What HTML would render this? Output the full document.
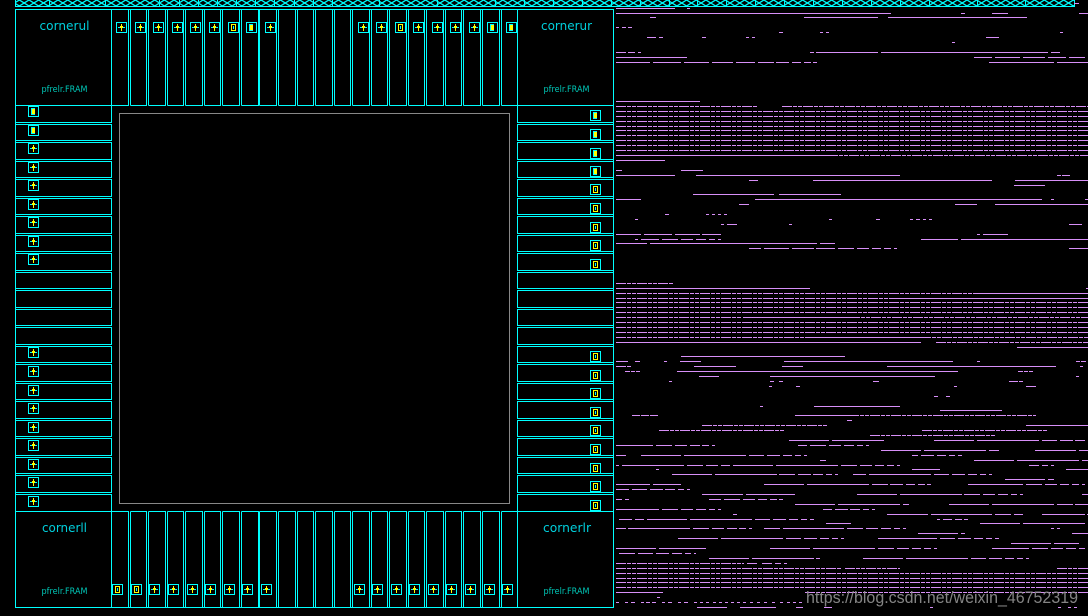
<!DOCTYPE html>
<html><head><meta charset="utf-8"><title>Layout</title>
<style>html,body{margin:0;padding:0;background:#000;width:1088px;height:616px;overflow:hidden}svg{display:block}</style>
</head><body>
<svg width="1088" height="616" viewBox="0 0 1088 616" xmlns="http://www.w3.org/2000/svg" shape-rendering="crispEdges">
<defs>
<pattern id="h" width="9.67" height="6" patternUnits="userSpaceOnUse"><path d="M0 0L9.67 6M9.67 0L0 6" stroke="#0ff" stroke-width="1.3" fill="none" shape-rendering="auto"/></pattern>
<g id="A"><rect x=".5" y=".5" width="10" height="10" fill="#000" stroke="#0ff"/><path d="M2 5.5H9" stroke="#0ff" fill="none"/><rect x="5" y="2" width="1" height="7" fill="#ff0"/><rect x="4" y="4" width="3" height="2" fill="#ff0"/></g>
<g id="B"><rect x=".5" y=".5" width="10" height="10" fill="#000" stroke="#0ff"/><path d="M3.5 2V9M3 2.5H7M3 8.5H7" stroke="#0ff" fill="none"/><rect x="4" y="3" width="3" height="5" fill="#ff0"/></g>
<g id="C"><rect x=".5" y=".5" width="10" height="10" fill="#000" stroke="#0ff"/><rect x="3.5" y="2.5" width="4" height="6" fill="none" stroke="#ff0"/><path d="M5.5 4V7" stroke="#0ff" fill="none"/></g>
</defs>
<rect width="1088" height="616" fill="#000"/>
<rect x="15" y="0" width="1059" height="6" fill="url(#h)"/>
<path d="M15 6.5H1075M15.5 0V6M49.5 0V6M105.5 0V6M159.5 0V6M179.5 0V6M198.5 0V6M217.5 0V6M236.5 0V6M255.5 0V6M274.5 0V6M294.5 0V6M313.5 0V6M332.5 0V6M379.5 0V6M437.5 0V6M495.5 0V6M524.5 0V6M553.5 0V6M582.5 0V6M611.5 0V6M640.5 0V6M669.5 0V6M697.5 0V6M726.5 0V6M755.5 0V6M784.5 0V6M813.5 0V6M842.5 0V6M871.5 0V6M900.5 0V6M929.5 0V6M977.5 0V6M1025.5 0V6M1074.5 0V6" stroke="#0ff" fill="none"/>
<g fill="none" stroke="#0ff">
<rect x="15.5" y="9.5" width="598" height="598"/>
<path d="M15 105.5H111M517 105.5H613M15 511.5H111M517 511.5H613"/>
<path d="M111.5 9V105.5H128.5V9M130.5 105.5V9M130.5 105.5H146.5V9M148.5 105.5V9M148.5 105.5H165.5V9M167.5 105.5V9M167.5 105.5H183.5V9M185.5 105.5V9M185.5 105.5H202.5V9M204.5 105.5V9M204.5 105.5H220.5V9M222.5 105.5V9M222.5 105.5H239.5V9M241.5 105.5V9M241.5 105.5H258.5V9M259.5 105.5V9M259.5 105.5H276.5V9M278.5 105.5V9M278.5 105.5H295.5V9M297.5 105.5V9M297.5 105.5H313.5V9M315.5 105.5V9M315.5 105.5H332.5V9M334.5 105.5V9M334.5 105.5H350.5V9M352.5 105.5V9M352.5 105.5H369.5V9M371.5 105.5V9M371.5 105.5H387.5V9M389.5 105.5V9M389.5 105.5H406.5V9M408.5 105.5V9M408.5 105.5H424.5V9M426.5 105.5V9M426.5 105.5H443.5V9M445.5 105.5V9M445.5 105.5H461.5V9M463.5 105.5V9M463.5 105.5H480.5V9M482.5 105.5V9M482.5 105.5H499.5V9M501.5 105.5V9M501.5 105.5H517.5V9"/>
<path d="M111.5 607V511.5H128.5V607M130.5 511.5V607M130.5 511.5H146.5V607M148.5 511.5V607M148.5 511.5H165.5V607M167.5 511.5V607M167.5 511.5H183.5V607M185.5 511.5V607M185.5 511.5H202.5V607M204.5 511.5V607M204.5 511.5H220.5V607M222.5 511.5V607M222.5 511.5H239.5V607M241.5 511.5V607M241.5 511.5H258.5V607M259.5 511.5V607M259.5 511.5H276.5V607M278.5 511.5V607M278.5 511.5H295.5V607M297.5 511.5V607M297.5 511.5H313.5V607M315.5 511.5V607M315.5 511.5H332.5V607M334.5 511.5V607M334.5 511.5H350.5V607M352.5 511.5V607M352.5 511.5H369.5V607M371.5 511.5V607M371.5 511.5H387.5V607M389.5 511.5V607M389.5 511.5H406.5V607M408.5 511.5V607M408.5 511.5H424.5V607M426.5 511.5V607M426.5 511.5H443.5V607M445.5 511.5V607M445.5 511.5H461.5V607M463.5 511.5V607M463.5 511.5H480.5V607M482.5 511.5V607M482.5 511.5H499.5V607M501.5 511.5V607M501.5 511.5H517.5V607"/>
<path d="M111.5 105V122.5H15M15 124.5H111.5V140.5H15M15 142.5H111.5V159.5H15M15 161.5H111.5V177.5H15M15 179.5H111.5V196.5H15M15 198.5H111.5V214.5H15M15 216.5H111.5V233.5H15M15 235.5H111.5V251.5H15M15 253.5H111.5V270.5H15M15 272.5H111.5V288.5H15M15 290.5H111.5V307.5H15M15 309.5H111.5V325.5H15M15 327.5H111.5V344.5H15M15 346.5H111.5V362.5H15M15 364.5H111.5V381.5H15M15 383.5H111.5V399.5H15M15 401.5H111.5V418.5H15M15 420.5H111.5V436.5H15M15 438.5H111.5V455.5H15M15 457.5H111.5V473.5H15M15 475.5H111.5V492.5H15M15 494.5H111.5V511"/>
<path d="M517.5 105V122.5H613M613 124.5H517.5V140.5H613M613 142.5H517.5V159.5H613M613 161.5H517.5V177.5H613M613 179.5H517.5V196.5H613M613 198.5H517.5V214.5H613M613 216.5H517.5V233.5H613M613 235.5H517.5V251.5H613M613 253.5H517.5V270.5H613M613 272.5H517.5V288.5H613M613 290.5H517.5V307.5H613M613 309.5H517.5V325.5H613M613 327.5H517.5V344.5H613M613 346.5H517.5V362.5H613M613 364.5H517.5V381.5H613M613 383.5H517.5V399.5H613M613 401.5H517.5V418.5H613M613 420.5H517.5V436.5H613M613 438.5H517.5V455.5H613M613 457.5H517.5V473.5H613M613 475.5H517.5V492.5H613M613 494.5H517.5V511"/>
</g>
<rect x="119.5" y="113.5" width="390" height="390" fill="none" stroke="#888"/>
<g font-family="'DejaVu Sans',sans-serif" font-size="12" fill="#00cfdc" shape-rendering="auto">
<text x="39.5" y="30" textLength="50" lengthAdjust="spacingAndGlyphs">cornerul</text>
<text x="541" y="30" textLength="51" lengthAdjust="spacingAndGlyphs">cornerur</text>
<text x="42" y="532" textLength="45" lengthAdjust="spacingAndGlyphs">cornerll</text>
<text x="543" y="532" textLength="48" lengthAdjust="spacingAndGlyphs">cornerlr</text>
</g>
<g font-family="'DejaVu Sans',sans-serif" font-size="9" fill="#00c8b8" shape-rendering="auto">
<text x="41.5" y="92" textLength="46" lengthAdjust="spacingAndGlyphs">pfrelr.FRAM</text>
<text x="543.5" y="92" textLength="46" lengthAdjust="spacingAndGlyphs">pfrelr.FRAM</text>
<text x="41.5" y="594" textLength="46" lengthAdjust="spacingAndGlyphs">pfrelr.FRAM</text>
<text x="543.5" y="594" textLength="46" lengthAdjust="spacingAndGlyphs">pfrelr.FRAM</text>
</g>
<use href="#A" x="116" y="22"/><use href="#A" x="135" y="22"/><use href="#A" x="153" y="22"/><use href="#A" x="172" y="22"/><use href="#A" x="190" y="22"/><use href="#A" x="209" y="22"/><use href="#C" x="228" y="22"/><use href="#B" x="246" y="22"/><use href="#A" x="265" y="22"/>
<use href="#A" x="358" y="22"/><use href="#A" x="376" y="22"/><use href="#C" x="395" y="22"/><use href="#A" x="413" y="22"/><use href="#A" x="432" y="22"/><use href="#A" x="450" y="22"/><use href="#A" x="469" y="22"/><use href="#B" x="487" y="22"/><use href="#B" x="506" y="22"/>
<use href="#B" x="28" y="106"/><use href="#B" x="28" y="125"/><use href="#A" x="28" y="143"/><use href="#A" x="28" y="162"/><use href="#A" x="28" y="180"/><use href="#A" x="28" y="199"/><use href="#A" x="28" y="217"/><use href="#A" x="28" y="236"/><use href="#A" x="28" y="254"/>
<use href="#A" x="28" y="347"/><use href="#A" x="28" y="366"/><use href="#A" x="28" y="385"/><use href="#A" x="28" y="403"/><use href="#A" x="28" y="422"/><use href="#A" x="28" y="440"/><use href="#A" x="28" y="459"/><use href="#A" x="28" y="477"/><use href="#A" x="28" y="496"/>
<use href="#B" x="590" y="110"/><use href="#B" x="590" y="129"/><use href="#B" x="590" y="148"/><use href="#B" x="590" y="166"/><use href="#C" x="590" y="184"/><use href="#C" x="590" y="203"/><use href="#C" x="590" y="222"/><use href="#C" x="590" y="240"/><use href="#C" x="590" y="259"/>
<use href="#C" x="590" y="351"/><use href="#C" x="590" y="370"/><use href="#C" x="590" y="388"/><use href="#C" x="590" y="407"/><use href="#C" x="590" y="425"/><use href="#C" x="590" y="444"/><use href="#C" x="590" y="463"/><use href="#C" x="590" y="481"/><use href="#C" x="590" y="500"/>
<use href="#C" x="112" y="584"/><use href="#C" x="131" y="584"/><use href="#A" x="149" y="584"/><use href="#A" x="168" y="584"/><use href="#A" x="187" y="584"/><use href="#A" x="205" y="584"/><use href="#A" x="224" y="584"/><use href="#A" x="242" y="584"/><use href="#A" x="261" y="584"/>
<use href="#A" x="354" y="584"/><use href="#A" x="372" y="584"/><use href="#A" x="391" y="584"/><use href="#A" x="409" y="584"/><use href="#A" x="428" y="584"/><use href="#A" x="446" y="584"/><use href="#A" x="465" y="584"/><use href="#A" x="484" y="584"/><use href="#A" x="502" y="584"/>
<path fill="none" stroke="#d78ff7" stroke-dasharray="10 1 4 1 4 1" d="M616 106.5H757M782 106.5H1088M616 111.5H1088M616 116.5H1088M616 121.5H1088M616 126.5H1088M616 130.5H1088M616 135.5H1088M616 140.5H1088M616 145.5H1088M616 150.5H1088M828 155.5H1088M616 283.5H673M616 293.5H973M616 298.5H899M616 302.5H1088M616 307.5H1088M616 312.5H1088M616 317.5H741M850 317.5H1088M616 322.5H1088M616 327.5H1088M616 332.5H1088M616 337.5H805M921 337.5H1088M936 342.5H1088M849 415.5H1036M702 425.5H828M659 430.5H785M922 430.5H1048M870 435.5H996M616 563.5H744M616 568.5H841M845 568.5H900M1057 568.5H1088M616 573.5H1088M616 578.5H1088M616 582.5H1088M616 587.5H1088M805 592.5H1088"/>
<path fill="none" stroke="#d78ff7" d="M1074 3.5H1079M616 8.5H675M687 8.5H690M616 13.5H891M961 13.5H965M992 13.5H1008M1079 13.5H1088M650 17.5H656M804 17.5H878M888 17.5H1027M616 27.5H619M622 27.5H626M628 27.5H632M779 32.5H783M820 32.5H823M826 32.5H829M1060 32.5H1063M647 37.5H656M659 37.5H663M702 37.5H706M746 37.5H749M752 37.5H755M986 37.5H999M952 42.5H955M616 52.5H626M628 52.5H635M638 52.5H641M810 52.5H814M816 52.5H878M881 52.5H1048M1051 52.5H1060M616 57.5H687M974 57.5H992M995 57.5H1020M1023 57.5H1045M1048 57.5H1066M1069 57.5H1085M616 62.5H650M653 62.5H681M684 62.5H709M712 62.5H733M736 62.5H755M758 62.5H774M776 62.5H789M792 62.5H801M804 62.5H811M813 62.5H817M989 62.5H1054M1057 62.5H1088
M616 101.5H700M616 155.5H828M616 160.5H665M616 170.5H622M681 170.5H703
M616 175.5H675M696 175.5H900M1057 175.5H1061M1062 175.5H1070M749 180.5H758M813 180.5H992M1015 180.5H1088M1014 185.5H1045M693 194.5H774M779 194.5H841M616 199.5H641M755 199.5H1042M1051 199.5H1054M1085 199.5H1088M739 204.5H749M955 204.5H977M995 204.5H1088M665 214.5H669M706 214.5H709M712 214.5H715M718 214.5H721M724 214.5H727M635 219.5H638M829 219.5H832M876 219.5H880M910 219.5H913M916 219.5H920M923 219.5H926M929 219.5H932M721 224.5H724M727 224.5H737M789 224.5H792M1069 224.5H1082M616 234.5H641M644 234.5H672M675 234.5H700M702 234.5H721M977 234.5H980M983 234.5H1008M635 239.5H638M641 239.5H659M662 239.5H678M681 239.5H693M696 239.5H706M709 239.5H715M718 239.5H721M921 239.5H958M961 239.5H1088M616 243.5H647M650 243.5H817M820 243.5H835M749 248.5H761M764 248.5H789M792 248.5H814M816 248.5H835M838 248.5H854M857 248.5H869M872 248.5H881M884 248.5H891M894 248.5H897M1069 248.5H1088
M616 288.5H810M1086 288.5H1088M973 293.5H1088M899 298.5H1088M743 317.5H850M805 337.5H921M616 342.5H921M1017 347.5H1088M681 356.5H845M616 361.5H628M635 361.5H640M664 361.5H667M680 361.5H701M784 361.5H953M977 361.5H980M1076 361.5H1080M1081 361.5H1086M616 366.5H626M627 366.5H631M694 366.5H736M782 366.5H803M887 366.5H1056M1080 366.5H1083
M625 371.5H630M631 371.5H635M636 371.5H640M677 371.5H958M1018 371.5H1023M1024 371.5H1028M1029 371.5H1033M699 376.5H719M770 376.5H935M1076 376.5H1079M669 381.5H672M770 381.5H774M779 381.5H783M873 381.5H879M1009 381.5H1018M1019 381.5H1023M769 386.5H772M796 386.5H800M954 386.5H957M1026 386.5H1036M934 396.5H938M946 396.5H950M760 406.5H763M814 406.5H900M940 410.5H1002M632 415.5H640M641 415.5H649M650 415.5H658M795 415.5H849M847 420.5H852M1026 425.5H1088
M789 440.5H829M832 440.5H884M934 440.5H974M977 440.5H1039M1042 440.5H1057M1060 440.5H1073M1075 440.5H1085M616 445.5H653M656 445.5H672M675 445.5H687M690 445.5H700M702 445.5H709M712 445.5H715M798 445.5H807M810 445.5H826M829 445.5H841M844 445.5H854M857 445.5H863M866 445.5H869
M881 450.5H921M924 450.5H986M989 450.5H999M1035 450.5H1076M1079 450.5H1088M616 455.5H626M641 455.5H681M684 455.5H746M749 455.5H764M767 455.5H780M783 455.5H792M795 455.5H801M804 455.5H807M912 455.5H918M921 455.5H934M937 455.5H946M949 455.5H955M958 455.5H962M820 460.5H826M974 460.5H1014M1017 460.5H1079M1082 460.5H1088M616 465.5H619M622 465.5H684M687 465.5H703M706 465.5H718M721 465.5H730M733 465.5H773M776 465.5H838M841 465.5H857M860 465.5H872M875 465.5H884M887 465.5H894M897 465.5H900M1029 465.5H1039M1042 465.5H1048M1051 465.5H1054M656 469.5H659M912 469.5H940M1066 469.5H1088
M672 474.5H712M715 474.5H777M779 474.5H795M798 474.5H811M813 474.5H823M826 474.5H832M835 474.5H838M853 474.5H866M869 474.5H931M934 474.5H949M952 474.5H965M968 474.5H977M980 474.5H986M989 474.5H992M1005 479.5H1045M1048 479.5H1054M616 484.5H650M653 484.5H681M764 484.5H804M807 484.5H869M872 484.5H888M890 484.5H903M906 484.5H915M918 484.5H925M927 484.5H931M968 484.5H1023M1026 484.5H1042M1045 484.5H1057M1060 484.5H1069M1072 484.5H1079M1082 484.5H1085M616 489.5H629M632 489.5H647M650 489.5H663M665 489.5H675M678 489.5H684M687 489.5H690
M702 494.5H743M746 494.5H795M857 494.5H897M900 494.5H962M964 494.5H980M983 494.5H995M998 494.5H1008M1011 494.5H1017M1020 494.5H1023M1082 494.5H1088M616 499.5H622M625 499.5H629M709 499.5H721M724 499.5H740M743 499.5H755M758 499.5H767M770 499.5H777M779 499.5H783M795 504.5H835M838 504.5H900M903 504.5H909M949 504.5H989M992 504.5H1054M1057 504.5H1073M1075 504.5H1088M616 509.5H659M662 509.5H678M681 509.5H693M696 509.5H706M709 509.5H715M718 509.5H721M823 509.5H832M835 509.5H848M850 509.5H860M863 509.5H869M872 509.5H875
M733 514.5H737M887 514.5H928M931 514.5H992M995 514.5H1011M1014 514.5H1023M1042 514.5H1085M1087 514.5H1088M619 519.5H632M635 519.5H644M647 519.5H687M690 519.5H752M755 519.5H770M773 519.5H786M789 519.5H798M801 519.5H807M810 519.5H814M937 519.5H940M943 519.5H952M955 519.5H962M964 519.5H968M826 523.5H851M980 523.5H1020M1023 523.5H1085M616 528.5H626M628 528.5H690M693 528.5H709M712 528.5H724M727 528.5H737M739 528.5H746M749 528.5H752M764 528.5H780M783 528.5H844M847 528.5H863M866 528.5H878M881 528.5H891M894 528.5H900M903 528.5H906M1051 528.5H1054M1057 528.5H1060
M918 533.5H958M961 533.5H965M1072 533.5H1088M678 538.5H718M721 538.5H783M786 538.5H801M804 538.5H817M820 538.5H829M832 538.5H838M841 538.5H844M878 538.5H937M940 538.5H955M958 538.5H971M974 538.5H983M986 538.5H992M995 538.5H999M1011 543.5H1051M1054 543.5H1079M616 548.5H656M659 548.5H706M770 548.5H810M813 548.5H875M878 548.5H894M897 548.5H909M912 548.5H921M924 548.5H931M934 548.5H937M992 548.5H1029M1032 548.5H1048M1051 548.5H1063M1066 548.5H1076M1079 548.5H1085M619 553.5H635M638 553.5H653M656 553.5H669M672 553.5H682M685 553.5H691M694 553.5H696M709 558.5H749M752 558.5H814M816 558.5H820M863 558.5H903M906 558.5H968M971 558.5H986M989 558.5H1002M1005 558.5H1014M1017 558.5H1023M1026 558.5H1029
M747 563.5H757M762 563.5H772M775 563.5H781M784 563.5H787M616 592.5H663M657 597.5H660M616 602.5H619M625 602.5H628M631 602.5H635M641 602.5H644M646 602.5H650M652 602.5H656M662 602.5H665M668 602.5H672M678 602.5H681M684 602.5H688M694 602.5H697M700 602.5H703M706 602.5H709M713 602.5H716M719 602.5H722M725 602.5H728M731 602.5H734M737 602.5H740M743 602.5H746M750 602.5H753M757 602.5H760M764 602.5H767M772 602.5H775M780 602.5H783M787 602.5H790M793 602.5H796M799 602.5H802M697 607.5H727M740 607.5H776M796 607.5H803M824 607.5H832M930 607.5H933M1058 607.5H1061M1068 607.5H1071M1074 607.5H1077"/>
<text x="806" y="603" font-family="'Liberation Sans',sans-serif" font-size="16.5" fill="#8f8f8f" fill-opacity=".92" textLength="272" lengthAdjust="spacingAndGlyphs" shape-rendering="auto">https://blog.csdn.net/weixin_46752319</text>
</svg>
</body></html>
